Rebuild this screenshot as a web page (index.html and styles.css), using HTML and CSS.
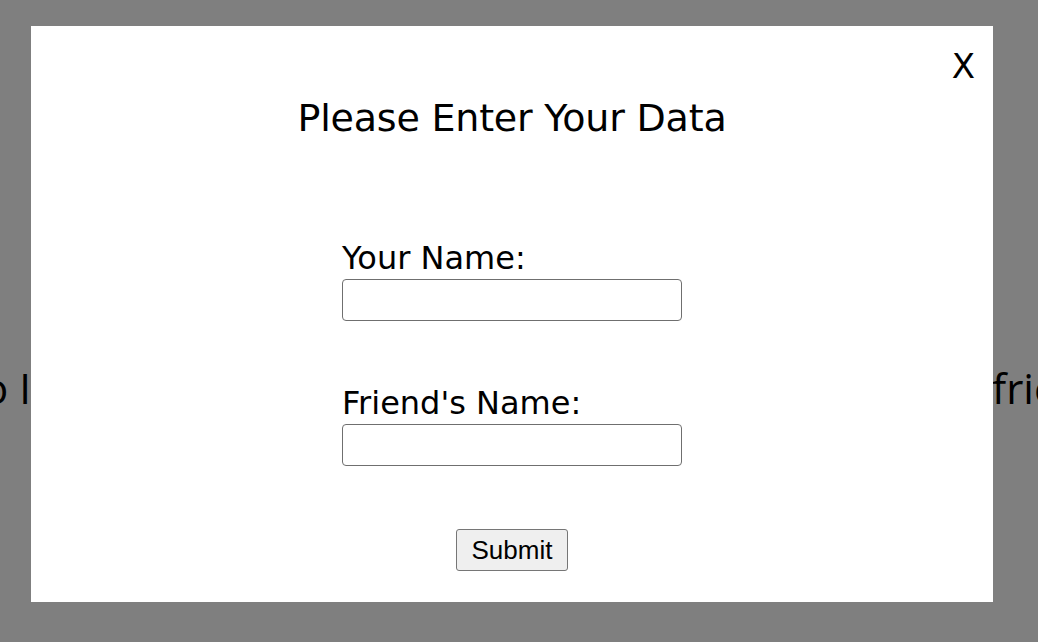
FILE: index.html
```html
<!DOCTYPE html>
<html>
<head>
<meta charset="utf-8">
<link rel="stylesheet" href="styles.css">
</head>
<body>
<main class="page">
  <div class="bg-line">
    <div class="bg-left"><span>Welcome to I</span></div>
    <div class="bg-mid"></div>
    <div class="bg-right"><span>friends</span></div>
  </div>
</main>
<div class="overlay">
  <div class="modal">
    <button class="close" type="button">X</button>
    <h1 class="title">Please Enter Your Data</h1>
    <form class="form">
      <label class="field">
        <span class="label">Your Name:</span>
        <input class="input" type="text">
      </label>
      <label class="field">
        <span class="label">Friend's Name:</span>
        <input class="input" type="text">
      </label>
      <div class="actions"><button class="submit" type="button">Submit</button></div>
    </form>
  </div>
</div>
</body>
</html>
```
FILE: styles.css
```css
html, body { margin: 0; padding: 0; }
body { background: #fff; width: 1038px; height: 642px; overflow: hidden; }

.page { height: 642px; padding-top: 360px; box-sizing: border-box; }
.bg-line {
  display: grid;
  grid-template-columns: 31px 1fr 45px;
  font-family: "Open Sans", sans-serif;
  font-size: 42px;
  line-height: 56px;
  color: #000;
  white-space: nowrap;
}
.bg-left { display: flex; justify-content: flex-end; }
.bg-right { display: flex; justify-content: flex-start; margin-left: -1px; }

.overlay {
  position: fixed;
  inset: 0;
  background: rgba(0,0,0,0.5);
  padding: 26px 45px 40px 31px;
  box-sizing: border-box;
  display: flex;
}
.modal {
  position: relative;
  flex: 1;
  background: #fff;
  display: flex;
  flex-direction: column;
  align-items: center;
  font-family: "DejaVu Sans", sans-serif;
  color: #000;
}
.close {
  position: absolute;
  top: 20px;
  right: 18px;
  border: 0;
  background: none;
  padding: 0;
  font-family: "DejaVu Sans", sans-serif;
  font-size: 34px;
  line-height: 40px;
  color: #000;
}
.title {
  margin: 68px 0 0;
  font-size: 38px;
  font-weight: 400;
  line-height: 48px;
  letter-spacing: -0.2px;
}
.form {
  margin-top: 100px;
  display: flex;
  flex-direction: column;
  gap: 66px;
  width: 340px;
}
.field { display: flex; flex-direction: column; }
.label { font-size: 32px; line-height: 32px; margin-bottom: 5px; }
.input {
  width: 340px;
  height: 42px;
  box-sizing: border-box;
  border: 1px solid #6f6f6f;
  border-radius: 4px;
  margin: 0;
}
.actions { display: flex; justify-content: center; margin-top: -3px; }
.submit {
  font-family: "Liberation Sans", Arial, sans-serif;
  font-size: 26px;
  height: 42px;
  padding: 0 15px;
  background: #efefef;
  border: 1px solid #767676;
  border-radius: 3px;
  color: #000;
}
```
